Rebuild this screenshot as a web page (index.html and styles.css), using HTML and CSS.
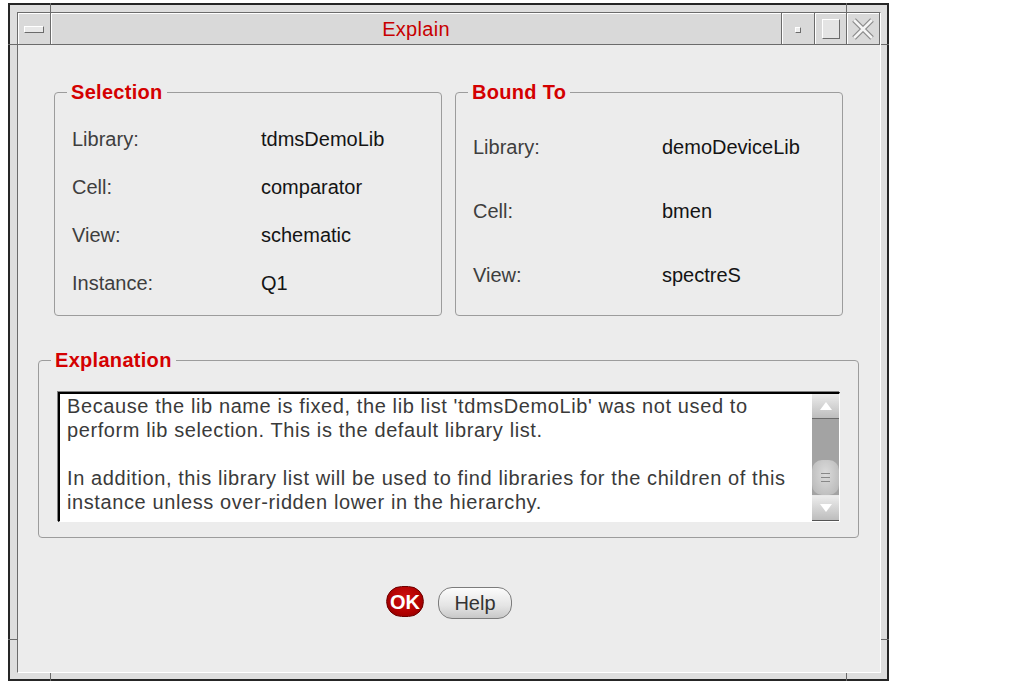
FILE: index.html
```html
<!DOCTYPE html>
<html>
<head>
<meta charset="utf-8">
<title>Explain</title>
<link rel="stylesheet" href="styles.css">
</head>
<body>
<div class="window">
  <span class="tick tick-tl"></span>
  <span class="tick tick-tr"></span>
  <span class="tick tick-bl"></span>
  <span class="tick tick-br"></span>
  <span class="tick tick-lt"></span>
  <span class="tick tick-rt"></span>
  <span class="tick tick-lb"></span>
  <span class="tick tick-rb"></span>
  <div class="inner">
    <div class="titlebar">
      <div class="tb tb-menu"><span class="menu-bar"></span></div>
      <div class="tb tb-title">Explain</div>
      <div class="tb tb-min"><span class="min-dot"></span></div>
      <div class="tb tb-max"><span class="max-box"></span></div>
      <div class="tb tb-close">
        <svg width="24" height="24" viewBox="0 0 24 24">
          <path d="M3 3 L21 21 M21 3 L3 21" stroke="#8a8a8a" stroke-width="5" fill="none"/>
          <path d="M3 3 L21 21 M21 3 L3 21" stroke="#f4f4f4" stroke-width="2.6" fill="none"/>
        </svg>
      </div>
    </div>
    <div class="content">
      <div class="top-row">
        <fieldset class="group">
          <legend>Selection</legend>
          <div class="rows rows-4">
            <span class="lbl">Library:</span><span class="val">tdmsDemoLib</span>
            <span class="lbl">Cell:</span><span class="val">comparator</span>
            <span class="lbl">View:</span><span class="val">schematic</span>
            <span class="lbl">Instance:</span><span class="val">Q1</span>
          </div>
        </fieldset>
        <fieldset class="group group-bound">
          <legend>Bound To</legend>
          <div class="rows rows-3">
            <span class="lbl">Library:</span><span class="val">demoDeviceLib</span>
            <span class="lbl">Cell:</span><span class="val">bmen</span>
            <span class="lbl">View:</span><span class="val">spectreS</span>
          </div>
        </fieldset>
      </div>
      <fieldset class="group explain">
        <legend>Explanation</legend>
        <div class="textbox">
          <div class="text">
            <p>Because the lib name is fixed, the lib list 'tdmsDemoLib' was not used to perform lib selection. This is the default library list.</p>
            <p>In addition, this library list will be used to find libraries for the children of this instance unless over-ridden lower in the hierarchy.</p>
          </div>
          <div class="scrollbar">
            <div class="sb-btn sb-up">
              <svg width="14" height="10" viewBox="0 0 14 10"><path d="M7 1 L13 9 L1 9 Z" fill="#fff"/></svg>
            </div>
            <div class="sb-trough">
              <div class="sb-thumb"><span class="grip"></span></div>
            </div>
            <div class="sb-btn sb-down">
              <svg width="14" height="10" viewBox="0 0 14 10"><path d="M1 1 L13 1 L7 9 Z" fill="#fff"/></svg>
            </div>
          </div>
        </div>
      </fieldset>
      <div class="actions">
        <button class="btn-ok">OK</button>
        <button class="btn-help">Help</button>
      </div>
    </div>
  </div>
</div>
</body>
</html>
```

FILE: styles.css
```css
html, body {
  margin: 0;
  padding: 0;
  background: #ffffff;
  font-family: "Liberation Sans", Arial, sans-serif;
}

.window {
  position: relative;
  box-sizing: border-box;
  width: 881px;
  height: 678px;
  margin: 3px 0 0 8px;
  border: 2px solid #262626;
  padding: 7px 6px 6px 7px;
  background: #dedede;
}

.tick {
  position: absolute;
  background: #6b6b6b;
}
.tick-tl { left: 40px; top: -2px; width: 1px; height: 9px; }
.tick-tr { left: 836px; top: -2px; width: 1px; height: 9px; }
.tick-bl { left: 40px; bottom: -2px; width: 1px; height: 8px; }
.tick-br { left: 836px; bottom: -2px; width: 1px; height: 8px; }
.tick-lt { left: -2px; top: 39px; width: 9px; height: 1px; }
.tick-rt { right: -2px; top: 39px; width: 8px; height: 1px; }
.tick-lb { left: -2px; top: 634px; width: 9px; height: 1px; }
.tick-rb { right: -2px; top: 634px; width: 8px; height: 1px; }

.inner {
  box-sizing: border-box;
  height: 100%;
  border: 1px solid;
  border-color: #6b6b6b #ffffff #ffffff #6b6b6b;
  display: flex;
  flex-direction: column;
}

/* ---------- title bar ---------- */
.titlebar {
  display: flex;
  height: 32px;
  box-sizing: border-box;
  border-bottom: 1px solid #6b6b6b;
  background: #d9d9d9;
}
.tb {
  box-sizing: border-box;
  border-right: 1px solid #6b6b6b;
  box-shadow: inset 1px 1px 0 #ffffff;
  display: flex;
  align-items: center;
  justify-content: center;
}
.tb-menu { width: 33px; }
.tb-title {
  width: 731px;
  color: #c80000;
  font-size: 20px;
  line-height: 20px;
  padding-top: 1px;
  letter-spacing: 0.3px;
}
.tb-min { width: 33px; }
.tb-max { width: 32px; }
.tb-close { width: 33px; }

.menu-bar {
  display: block;
  width: 18px;
  height: 5px;
  margin-top: 1px;
  background: #e8e8e8;
  border: 1px solid;
  border-color: #ffffff #6b6b6b #6b6b6b #ffffff;
}
.min-dot {
  display: block;
  width: 4px;
  height: 4px;
  margin-top: 3px;
  background: #eeeeee;
  border: 1px solid;
  border-color: #ffffff #6b6b6b #6b6b6b #ffffff;
}
.max-box {
  display: block;
  width: 16px;
  height: 18px;
  background: #e4e4e4;
  border: 1px solid;
  border-color: #ffffff #6b6b6b #6b6b6b #ffffff;
}

/* ---------- content ---------- */
.content {
  flex: 1;
  background: #ececec;
  display: flex;
  flex-direction: column;
}

.top-row {
  display: flex;
  gap: 13px;
  padding: 37px 37px 0 36px;
}

.group {
  margin: 0;
  border: 1px solid #9c9c9c;
  border-radius: 4px;
  padding: 14px 0 8px 0;
  min-width: 0;
}
.top-row .group { flex: 1; }

.group legend {
  margin-left: 12px;
  padding: 0 4px;
  font-weight: bold;
  font-size: 20px;
  line-height: 20px;
  color: #d40000;
  letter-spacing: 0.3px;
}

.rows {
  display: grid;
  grid-template-columns: 189px auto;
  align-items: center;
  height: 191px;
  padding-left: 17px;
  font-size: 20px;
}
.rows-4 { grid-template-rows: repeat(4, 1fr); }
.rows-3 { grid-template-rows: repeat(3, 1fr); }
.group-bound .rows { padding-left: 17px; }

.lbl { color: #3e3e3e; }
.val { color: #141414; }

/* ---------- explanation ---------- */
.explain {
  margin: 34px 21px 0 20px;
  padding: 22px 18px 15px 18px;
}
.explain legend { margin-left: -6px; }

.textbox {
  display: flex;
  height: 130px;
  margin-left: 1px;
  box-sizing: border-box;
  border-top: 2px solid #000000;
  border-left: 2px solid #000000;
  border-right: 1px solid #ffffff;
  border-bottom: 1px solid #ffffff;
  box-shadow: -1px -1px 0 #808080;
  background: #ffffff;
}

.text {
  flex: 1;
  padding: 0 0 0 7px;
  font-size: 20px;
  line-height: 24px;
  letter-spacing: 0.6px;
  color: #3a3a3a;
  overflow: hidden;
}
.text p { margin: 0 0 24px 0; }
.text p:last-child { margin-bottom: 0; }

.scrollbar {
  width: 27px;
  display: flex;
  flex-direction: column;
  background: #a0a0a0;
}
.sb-btn {
  height: 25px;
  display: flex;
  align-items: center;
  justify-content: center;
  background: linear-gradient(#ececec, #bdbdbd);
  box-sizing: border-box;
}
.sb-up { border-bottom: 1px solid #6a6a6a; }
.sb-down { height: 26px; border-bottom: 1px solid #555555; border-top: 1px solid #e8e8e8; }

.sb-trough {
  flex: 1;
  display: flex;
  flex-direction: column;
  justify-content: flex-end;
  background: #a3a3a3;
}
.sb-thumb {
  height: 35px;
  border-radius: 10px;
  background: radial-gradient(ellipse at 50% 40%, #dcdcdc, #b4b4b4);
  display: flex;
  align-items: center;
  justify-content: center;
}
.grip {
  display: block;
  width: 9px;
  height: 7px;
  border-top: 1px solid #888;
  border-bottom: 1px solid #888;
  background: linear-gradient(#888, #888) center / 9px 1px no-repeat;
}

/* ---------- buttons ---------- */
.actions {
  display: flex;
  justify-content: center;
  align-items: flex-start;
  gap: 14px;
  margin-top: 48px;
}
.btn-ok {
  width: 38px;
  height: 31px;
  padding: 0;
  border: 1px solid #6e0000;
  border-radius: 16px;
  background: radial-gradient(ellipse at 50% 40%, #d01010 0%, #b00000 60%, #7a0000 100%);
  color: #ffffff;
  font-family: "Liberation Sans", Arial, sans-serif;
  font-weight: bold;
  font-size: 20px;
  line-height: 20px;
}
.btn-help {
  width: 74px;
  height: 32px;
  margin-top: 1px;
  padding: 0;
  border: 1px solid #7c7c7c;
  border-radius: 14px;
  background: linear-gradient(#fcfcfc, #e4e4e4 60%, #c8c8c8);
  color: #333333;
  font-family: "Liberation Sans", Arial, sans-serif;
  font-size: 20px;
  line-height: 20px;
}
```
